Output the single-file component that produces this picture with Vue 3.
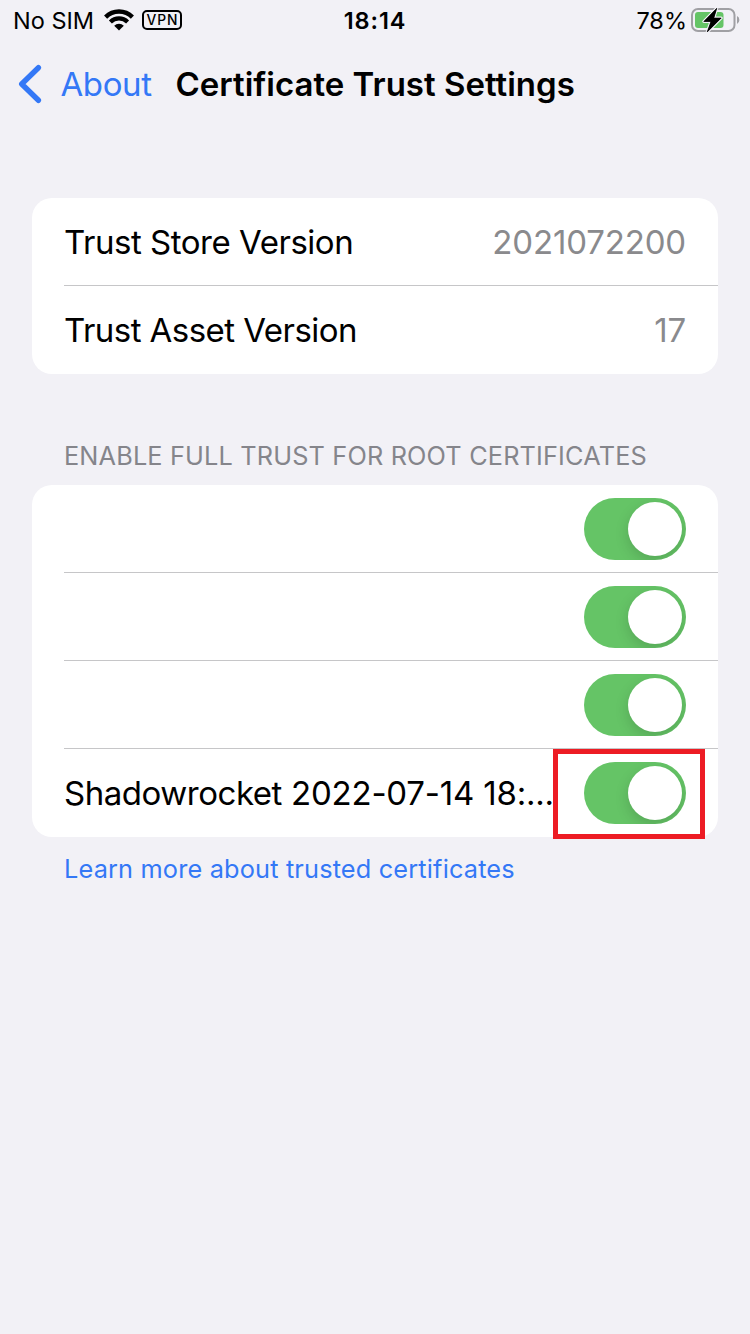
<script setup>
const versions = [
  { label: 'Trust Store Version', value: '2021072200', cls: 'store' },
  { label: 'Trust Asset Version', value: '17', cls: 'asset' },
]
const certificates = [
  { name: '', date: '' },
  { name: '', date: '' },
  { name: '', date: '' },
  { name: 'Shadowrocket', date: ' 2022-07-14 18:...', marked: true },
]
</script>

<template>
  <div class="screen">
    <header class="status">
      <div class="left">
        <span class="carrier">No SIM</span>
        <svg class="wifi" width="30" height="22" viewBox="0 0 30 22">
          <g fill="none" stroke="#000">
            <path d="M1.6 8.1 A19 19 0 0 1 28.4 8.1" stroke-width="4.4" />
            <path d="M6.4 12.9 A12.2 12.2 0 0 1 23.6 12.9" stroke-width="4.2" />
          </g>
          <path d="M10.2 16.7 A6.8 6.8 0 0 1 19.8 16.7 L15 21.6 Z" />
        </svg>
        <span class="vpn">VPN</span>
      </div>
      <div class="time">18:14</div>
      <div class="right">
        <span class="percent">78%</span>
        <svg class="battery" width="50" height="26" viewBox="0 0 50 26">
          <rect x="2" y="2" width="42.5" height="22" rx="6" fill="none" stroke="#a0a0a4" stroke-width="2" />
          <path d="M47 9 Q49.4 10.2 49.4 13 Q49.4 15.8 47 17 Z" fill="#a0a0a4" />
          <rect x="5" y="5" width="28.5" height="16" rx="3" fill="#65c466" />
          <path d="M26.8 1.2 L13.8 14.5 H21 L17.2 25 L31.2 11 H23.8 Z" fill="#000" stroke="#f2f1f6" stroke-width="3" paint-order="stroke" stroke-linejoin="round" />
          <path d="M26.8 1.2 L13.8 14.5 H21 L17.2 25 L31.2 11 H23.8 Z" stroke="#000" stroke-width="0.6" stroke-linejoin="round" />
        </svg>
      </div>
    </header>

    <nav class="nav">
      <svg class="chevron" width="26" height="42" viewBox="0 0 26 42">
        <path d="M21.4 4.7 L4.7 21 L21.4 37.3" fill="none" stroke="#3478f6" stroke-width="5.4" stroke-linecap="round" stroke-linejoin="round" />
      </svg>
      <span class="back">About</span>
      <h1>Certificate Trust Settings</h1>
    </nav>

    <main>
      <section class="card">
        <div v-for="v in versions" :key="v.label" class="row">
          <span class="label" :class="v.cls">{{ v.label }}</span>
          <span class="value">{{ v.value }}</span>
        </div>
      </section>

      <h2>ENABLE FULL TRUST FOR ROOT CERTIFICATES</h2>

      <section class="card">
        <div v-for="(c, i) in certificates" :key="i" class="row">
          <span class="label cert"><span class="name">{{ c.name }}</span>{{ c.date }}</span>
          <span class="toggle"><i></i></span>
          <span v-if="c.marked" class="marker"></span>
        </div>
      </section>

      <a class="learn">Learn more about trusted certificates</a>
    </main>
  </div>
</template>

<style>
html,
body {
  background: #f2f1f6;
}
</style>

<style scoped>
.screen {
  width: 750px;
  height: 1334px;
  overflow: hidden;
  background: #f2f1f6;
  color: #000;
  font-family: Inter, "Liberation Sans", sans-serif;
  white-space: nowrap;
}
.status {
  display: grid;
  grid-template-columns: 1fr auto 1fr;
  height: 40px;
  line-height: 42px;
  font-size: 23.5px;
}
.left,
.right {
  display: flex;
  align-items: center;
  height: 40px;
}
.left {
  padding-left: 13px;
}
.carrier,
.percent {
  padding-top: 2px;
}
.carrier {
  width: 81px;
}
.wifi {
  margin: 0 8px 0 10px;
}
.vpn {
  box-sizing: border-box;
  width: 40px;
  height: 20px;
  padding-left: 1px;
  border: 2px solid #000;
  border-radius: 5px;
  font-size: 13.8px;
  font-weight: 500;
  line-height: 17px;
  letter-spacing: 1px;
  text-align: center;
}
.time {
  font-weight: 600;
  letter-spacing: 0.9px;
}
.right {
  justify-content: flex-end;
  padding-right: 10px;
}
.battery {
  margin-left: 3px;
}
.nav {
  display: flex;
  align-items: center;
  height: 88px;
  padding-left: 17px;
  font-size: 33px;
}
.back {
  width: 115px;
  margin-left: 17.5px;
  color: #3478f6;
  letter-spacing: -0.4px;
}
h1 {
  margin: 0;
  font-size: 33px;
  font-weight: 600;
}
main {
  padding: 70px 32px 0;
}
.card {
  border-radius: 20px;
  background: #fff;
}
.row {
  position: relative;
  display: flex;
  align-items: center;
  justify-content: space-between;
  height: 88px;
  padding: 0 32px;
  font-size: 33px;
}
.row:not(:last-child)::after {
  content: "";
  position: absolute;
  right: 0;
  bottom: 0;
  left: 32px;
  height: 1px;
  background: #c6c6c8;
}
.store {
  letter-spacing: -0.47px;
}
.asset {
  letter-spacing: -0.54px;
}
.value {
  color: #8a8a8d;
  letter-spacing: -0.15px;
}
.toggle {
  box-sizing: border-box;
  flex: none;
  display: flex;
  justify-content: flex-end;
  width: 102px;
  height: 62px;
  padding: 4px;
  overflow: hidden;
  border-radius: 31px;
  background: #65c466;
}
.toggle i {
  width: 54px;
  height: 54px;
  border-radius: 50%;
  background: #fff;
  box-shadow: 0 5px 14px rgba(0, 0, 0, 0.15);
}
.cert {
  width: 490px;
  white-space: pre;
  letter-spacing: -0.2px;
}
.name {
  letter-spacing: -0.47px;
}
.marker {
  position: absolute;
  top: 0;
  right: 13px;
  box-sizing: border-box;
  width: 152px;
  height: 90px;
  border: 5px solid #ed1c24;
}
h2 {
  margin: 0;
  height: 111px;
  padding: 66px 32px 0;
  box-sizing: border-box;
  color: #85858b;
  font-size: 25.3px;
  font-weight: 400;
  line-height: 32px;
  letter-spacing: 0.16px;
}
.learn {
  display: block;
  padding: 16px 32px 0;
  color: #3478f6;
  font-size: 25.3px;
  line-height: 32px;
  letter-spacing: 0.17px;
}
</style>
